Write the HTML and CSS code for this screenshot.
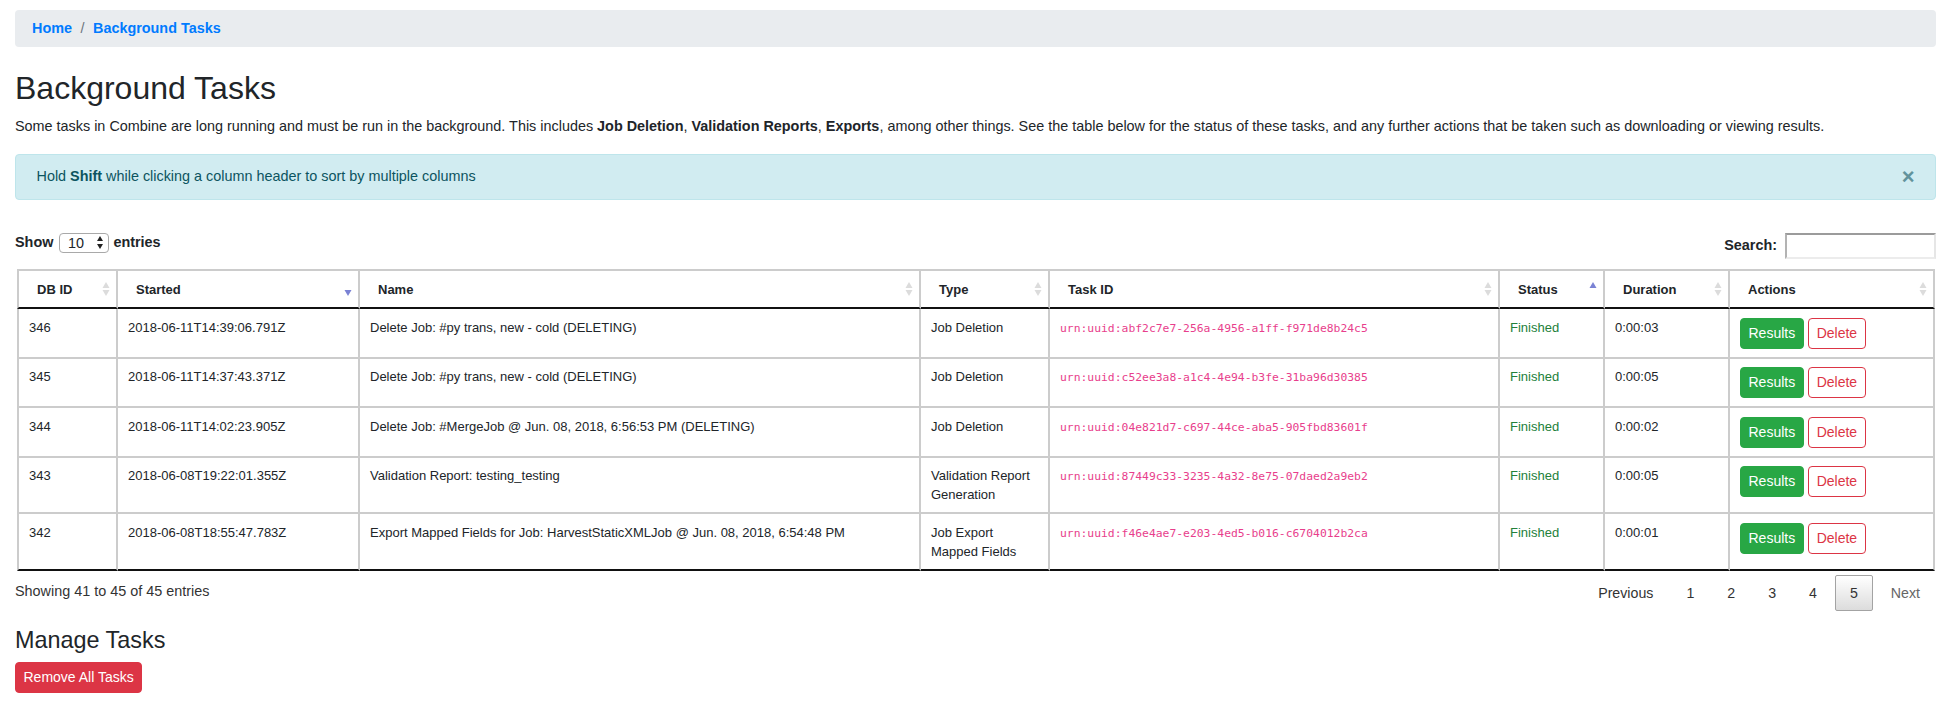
FILE: index.html
```html
<!DOCTYPE html>
<html lang="en">
<head>
<meta charset="utf-8">
<title>Background Tasks</title>
<link rel="stylesheet" href="styles.css">
</head>
<body>
<div class="page">
  <nav class="crumbs">
    <a class="crumb" href="#">Home</a>
    <span class="crumb-sep">/</span>
    <a class="crumb" href="#">Background Tasks</a>
  </nav>

  <h1 class="title">Background Tasks</h1>
  <p class="intro">Some tasks in Combine are long running and must be run in the background. This includes <b>Job Deletion</b>, <b>Validation Reports</b>, <b>Exports</b>, among other things. See the table below for the status of these tasks, and any further actions that be taken such as downloading or viewing results.</p>

  <div class="alert">
    <span>Hold <b>Shift</b> while clicking a column header to sort by multiple columns</span>
    <span class="alert-close">&times;</span>
  </div>

  <div class="dt-top">
    <div class="dt-length">
      <span class="lbl">Show</span>
      <span class="select"><span class="select-val">10</span>
        <svg class="select-arrows" width="6" height="13" viewBox="0 0 6 13"><polygon points="3,0 6,5 0,5" fill="#222"/><polygon points="0,8 6,8 3,13" fill="#222"/></svg>
      </span>
      <span class="lbl">entries</span>
    </div>
    <div class="dt-filter">
      <span class="lbl">Search:</span>
      <span class="search-input"></span>
    </div>
  </div>

  <table class="tasks">
    <colgroup>
      <col class="w-id"><col class="w-started"><col class="w-name"><col class="w-type"><col class="w-task"><col class="w-status"><col class="w-dur"><col class="w-act">
    </colgroup>
    <thead>
      <tr>
        <th><div class="thc"><span>DB ID</span><svg class="sort" width="8" height="14" viewBox="0 0 8 14"><polygon points="4,0 7.5,6 0.5,6" fill="#dcdcdc"/><polygon points="0.5,8 7.5,8 4,14" fill="#dcdcdc"/></svg></div></th>
        <th><div class="thc"><span>Started</span><svg class="sort" width="8" height="14" viewBox="0 0 8 14"><polygon points="0.5,8 7.5,8 4,14" fill="#7a82d4"/></svg></div></th>
        <th><div class="thc"><span>Name</span><svg class="sort" width="8" height="14" viewBox="0 0 8 14"><polygon points="4,0 7.5,6 0.5,6" fill="#dcdcdc"/><polygon points="0.5,8 7.5,8 4,14" fill="#dcdcdc"/></svg></div></th>
        <th><div class="thc"><span>Type</span><svg class="sort" width="8" height="14" viewBox="0 0 8 14"><polygon points="4,0 7.5,6 0.5,6" fill="#dcdcdc"/><polygon points="0.5,8 7.5,8 4,14" fill="#dcdcdc"/></svg></div></th>
        <th><div class="thc"><span>Task ID</span><svg class="sort" width="8" height="14" viewBox="0 0 8 14"><polygon points="4,0 7.5,6 0.5,6" fill="#dcdcdc"/><polygon points="0.5,8 7.5,8 4,14" fill="#dcdcdc"/></svg></div></th>
        <th><div class="thc"><span>Status</span><svg class="sort" width="8" height="14" viewBox="0 0 8 14"><polygon points="4,0 7.5,6 0.5,6" fill="#7a82d4"/></svg></div></th>
        <th><div class="thc"><span>Duration</span><svg class="sort" width="8" height="14" viewBox="0 0 8 14"><polygon points="4,0 7.5,6 0.5,6" fill="#dcdcdc"/><polygon points="0.5,8 7.5,8 4,14" fill="#dcdcdc"/></svg></div></th>
        <th><div class="thc"><span>Actions</span><svg class="sort" width="8" height="14" viewBox="0 0 8 14"><polygon points="4,0 7.5,6 0.5,6" fill="#dcdcdc"/><polygon points="0.5,8 7.5,8 4,14" fill="#dcdcdc"/></svg></div></th>
      </tr>
    </thead>
    <tbody>
      <tr>
        <td>346</td>
        <td>2018-06-11T14:39:06.791Z</td>
        <td>Delete Job: #py trans, new - cold (DELETING)</td>
        <td>Job Deletion</td>
        <td><code>urn:uuid:abf2c7e7-256a-4956-a1ff-f971de8b24c5</code></td>
        <td class="ok">Finished</td>
        <td>0:00:03</td>
        <td><div class="acts"><a class="btn btn-success" href="#">Results</a><a class="btn btn-outline-danger" href="#">Delete</a></div></td>
      </tr>
      <tr>
        <td>345</td>
        <td>2018-06-11T14:37:43.371Z</td>
        <td>Delete Job: #py trans, new - cold (DELETING)</td>
        <td>Job Deletion</td>
        <td><code>urn:uuid:c52ee3a8-a1c4-4e94-b3fe-31ba96d30385</code></td>
        <td class="ok">Finished</td>
        <td>0:00:05</td>
        <td><div class="acts"><a class="btn btn-success" href="#">Results</a><a class="btn btn-outline-danger" href="#">Delete</a></div></td>
      </tr>
      <tr>
        <td>344</td>
        <td>2018-06-11T14:02:23.905Z</td>
        <td>Delete Job: #MergeJob @ Jun. 08, 2018, 6:56:53 PM (DELETING)</td>
        <td>Job Deletion</td>
        <td><code>urn:uuid:04e821d7-c697-44ce-aba5-905fbd83601f</code></td>
        <td class="ok">Finished</td>
        <td>0:00:02</td>
        <td><div class="acts"><a class="btn btn-success" href="#">Results</a><a class="btn btn-outline-danger" href="#">Delete</a></div></td>
      </tr>
      <tr>
        <td>343</td>
        <td>2018-06-08T19:22:01.355Z</td>
        <td>Validation Report: testing_testing</td>
        <td>Validation Report Generation</td>
        <td><code>urn:uuid:87449c33-3235-4a32-8e75-07daed2a9eb2</code></td>
        <td class="ok">Finished</td>
        <td>0:00:05</td>
        <td><div class="acts"><a class="btn btn-success" href="#">Results</a><a class="btn btn-outline-danger" href="#">Delete</a></div></td>
      </tr>
      <tr>
        <td>342</td>
        <td>2018-06-08T18:55:47.783Z</td>
        <td>Export Mapped Fields for Job: HarvestStaticXMLJob @ Jun. 08, 2018, 6:54:48 PM</td>
        <td>Job Export Mapped Fields</td>
        <td><code>urn:uuid:f46e4ae7-e203-4ed5-b016-c6704012b2ca</code></td>
        <td class="ok">Finished</td>
        <td>0:00:01</td>
        <td><div class="acts"><a class="btn btn-success" href="#">Results</a><a class="btn btn-outline-danger" href="#">Delete</a></div></td>
      </tr>
    </tbody>
  </table>

  <div class="dt-bottom">
    <div class="dt-info">Showing 41 to 45 of 45 entries</div>
    <div class="dt-pages">
      <span class="pg">Previous</span>
      <span class="pg">1</span>
      <span class="pg">2</span>
      <span class="pg">3</span>
      <span class="pg">4</span>
      <span class="pg pg-current">5</span>
      <span class="pg pg-disabled">Next</span>
    </div>
  </div>

  <h3 class="subtitle">Manage Tasks</h3>
  <a class="btn btn-danger" href="#">Remove All Tasks</a>
</div>
</body>
</html>
```

FILE: styles.css
```css
* { box-sizing: border-box; }
html, body { margin: 0; padding: 0; background: #fff; }
body {
  font-family: "Liberation Sans", Arial, Helvetica, sans-serif;
  font-size: 14.4px;
  line-height: 21px;
  color: #212529;
}
.page { padding: 10px 17px 0 15px; }

/* breadcrumb */
.crumbs {
  display: flex;
  align-items: center;
  background: #e9ecef;
  border-radius: 4px;
  padding: 8px 17px;
  height: 37px;
  font-weight: bold;
}
.crumb { color: #007bff; text-decoration: none; }
.crumb-sep { color: #6c757d; font-weight: normal; padding: 0 8.5px; }

.title {
  margin: 23px 0 0;
  font-size: 32px;
  line-height: 37.8px;
  font-weight: normal;
}
.intro { margin: 8.5px 0 0; }

/* alert */
.alert {
  margin-top: 16.7px;
  display: flex;
  justify-content: space-between;
  align-items: center;
  background: #d1ecf1;
  border: 1px solid #bee5eb;
  border-radius: 4px;
  color: #0c5460;
  padding: 11.5px 20.5px;
}
.alert-close {
  font-weight: bold;
  font-size: 22px;
  line-height: 21px;
  color: #62939c;
}

/* datatable top controls */
.dt-top {
  margin-top: 33px;
  display: flex;
  justify-content: space-between;
  align-items: flex-start;
}
.dt-length, .dt-filter { display: flex; align-items: center; }
.lbl { font-weight: bold; }
.dt-length { height: 20px; }
.select {
  display: flex;
  align-items: center;
  justify-content: space-between;
  width: 50px;
  height: 20px;
  margin: 0 4px 0 6px;
  padding: 0 5px 0 7.5px;
  border: 1px solid #a9a9a9;
  border-radius: 4px;
  background: #fff;
  line-height: 18px;
}
.select-arrows { display: block; }
.dt-filter { height: 26px; }
.search-input {
  display: block;
  width: 151px;
  height: 26px;
  margin-left: 8px;
  border-top: 2px solid #9b9b9b;
  border-left: 2px solid #b3b3b3;
  border-right: 2px solid #e6e6e6;
  border-bottom: 2px solid #ececec;
  background: #fff;
}

/* table */
.tasks {
  margin: 10px 0 0 2px;
  width: calc(100% - 3px);
  table-layout: fixed;
  border-collapse: separate;
  border-spacing: 0;
  font-size: 13px;
  line-height: 19px;
}
.w-id { width: 101px; }
.w-started { width: 242px; }
.w-name { width: 561px; }
.w-type { width: 129px; }
.w-task { width: 450px; }
.w-status { width: 105px; }
.w-dur { width: 125px; }
.tasks th, .tasks td {
  border-right: 2px solid #cccccc;
  border-bottom: 2px solid #cccccc;
  text-align: left;
  vertical-align: top;
}
.tasks th:first-child, .tasks td:first-child { border-left: 2px solid #cccccc; }
.tasks th {
  border-top: 2px solid #cccccc;
  border-bottom: 2px solid #111;
  padding: 9px 6px 8.5px 18px;
  font-weight: bold;
}
.thc { display: flex; justify-content: space-between; align-items: center; }
.sort { display: block; flex: none; }
.tasks td { padding: 8.5px 10px 8px; }
.tasks tbody tr:last-child td { border-bottom: 2px solid #111; }
.ok { color: #23803a; }
code {
  font-family: "DejaVu Sans Mono", "Liberation Mono", monospace;
  font-size: 11.375px;
  color: #e83e8c;
}
.acts { display: flex; gap: 4.5px; }

/* buttons */
.btn {
  display: inline-block;
  font-size: 14px;
  line-height: 21px;
  padding: 4px 7.5px;
  border: 1px solid transparent;
  border-radius: 4px;
  text-decoration: none;
  white-space: nowrap;
}
.btn-success { background: #28a745; border-color: #28a745; color: #fff; }
.btn-outline-danger { background: #fff; border-color: #dc3545; color: #dc3545; }
.btn-danger { background: #dc3545; border-color: #dc3545; color: #fff; margin-top: 8px; }

/* bottom */
.dt-bottom {
  display: flex;
  justify-content: space-between;
  align-items: flex-start;
}
.dt-info { padding-top: 10.5px; line-height: 20.3px; color: #333; }
.dt-pages { display: flex; padding-top: 4.5px; padding-right: 1px; font-size: 14.2px; line-height: 20px; }
.pg {
  display: block;
  padding: 7px 14px;
  border: 1px solid transparent;
  border-radius: 2px;
  margin-left: 3px;
  color: #333;
}
.pg:first-child { margin-left: 0; }
.pg-current {
  border-color: #a3a3a3;
  background: linear-gradient(to bottom, #ffffff 0%, #dcdcdc 100%);
}
.pg-disabled { color: #666; }

.subtitle {
  margin: 15px 0 0;
  font-size: 23.4px;
  line-height: 28px;
  font-weight: normal;
}
```
